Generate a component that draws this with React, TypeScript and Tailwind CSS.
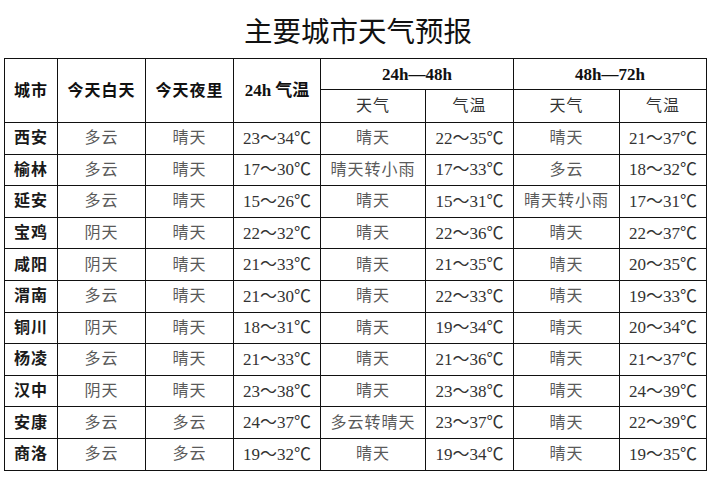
import React from 'react';

interface Row {
  city: string;
  day: string;
  night: string;
  temp24: string;
  w48: string;
  t48: string;
  w72: string;
  t72: string;
}

const rows: Row[] = [
  { city: '西安', day: '多云', night: '晴天', temp24: '23～34℃', w48: '晴天', t48: '22～35℃', w72: '晴天', t72: '21～37℃' },
  { city: '榆林', day: '多云', night: '晴天', temp24: '17～30℃', w48: '晴天转小雨', t48: '17～33℃', w72: '多云', t72: '18～32℃' },
  { city: '延安', day: '多云', night: '晴天', temp24: '15～26℃', w48: '晴天', t48: '15～31℃', w72: '晴天转小雨', t72: '17～31℃' },
  { city: '宝鸡', day: '阴天', night: '晴天', temp24: '22～32℃', w48: '晴天', t48: '22～36℃', w72: '晴天', t72: '22～37℃' },
  { city: '咸阳', day: '阴天', night: '晴天', temp24: '21～33℃', w48: '晴天', t48: '21～35℃', w72: '晴天', t72: '20～35℃' },
  { city: '渭南', day: '多云', night: '晴天', temp24: '21～30℃', w48: '晴天', t48: '22～33℃', w72: '晴天', t72: '19～33℃' },
  { city: '铜川', day: '阴天', night: '晴天', temp24: '18～31℃', w48: '晴天', t48: '19～34℃', w72: '晴天', t72: '20～34℃' },
  { city: '杨凌', day: '多云', night: '晴天', temp24: '21～33℃', w48: '晴天', t48: '21～36℃', w72: '晴天', t72: '21～37℃' },
  { city: '汉中', day: '阴天', night: '晴天', temp24: '23～38℃', w48: '晴天', t48: '23～38℃', w72: '晴天', t72: '24～39℃' },
  { city: '安康', day: '多云', night: '多云', temp24: '24～37℃', w48: '多云转晴天', t48: '23～37℃', w72: '晴天', t72: '22～39℃' },
  { city: '商洛', day: '多云', night: '多云', temp24: '19～32℃', w48: '晴天', t48: '19～34℃', w72: '晴天', t72: '19～35℃' },
];

const serif = 'font-["Liberation_Serif","Noto_Sans_CJK_SC",serif]';

export default function App() {
  const cell = 'border border-[#111] text-center align-middle p-0 leading-none';
  const word = `${cell} text-[#5a5a5a] tracking-[1px]`;
  const num = `${cell} text-[#333] text-[17px]`;

  return (
    <div className={`w-[716px] h-[478px] bg-white ${serif}`}>
      <div className="h-[58px] flex items-center justify-center pt-[2px]">
        <h1 className='text-[28.5px] font-["Noto_Sans_CJK_SC",sans-serif] text-[#111] leading-none'>
          主要城市天气预报
        </h1>
      </div>

      <table className="ml-[4px] w-[702px] table-fixed border-collapse text-[16px]">
        <colgroup>
          <col className="w-[53px]" />
          <col className="w-[88px]" />
          <col className="w-[88px]" />
          <col className="w-[87px]" />
          <col className="w-[105px]" />
          <col className="w-[88px]" />
          <col className="w-[106px]" />
          <col className="w-[87px]" />
        </colgroup>
        <thead>
          <tr className="h-[31px]">
            <th rowSpan={2} className={`${cell} font-bold text-[#111] tracking-[1px]`}>城市</th>
            <th rowSpan={2} className={`${cell} font-bold text-[#111] tracking-[1px]`}>今天白天</th>
            <th rowSpan={2} className={`${cell} font-bold text-[#111] tracking-[1px]`}>今天夜里</th>
            <th rowSpan={2} className={`${cell} font-bold text-[#111] text-[17px]`}>24h 气温</th>
            <th colSpan={2} className={`${cell} font-bold text-[#111] text-[17px]`}>24h—48h</th>
            <th colSpan={2} className={`${cell} font-bold text-[#111] text-[17px]`}>48h—72h</th>
          </tr>
          <tr className="h-[33px]">
            <th className={`${cell} font-normal text-[#333] tracking-[1px]`}>天气</th>
            <th className={`${cell} font-normal text-[#333] tracking-[1px]`}>气温</th>
            <th className={`${cell} font-normal text-[#333] tracking-[1px]`}>天气</th>
            <th className={`${cell} font-normal text-[#333] tracking-[1px]`}>气温</th>
          </tr>
        </thead>
        <tbody>
          {rows.map((r) => (
            <tr key={r.city} className="h-[31.6px]">
              <td className={`${cell} font-bold text-[#1a1a1a] tracking-[1px]`}>{r.city}</td>
              <td className={word}>{r.day}</td>
              <td className={word}>{r.night}</td>
              <td className={num}>{r.temp24}</td>
              <td className={word}>{r.w48}</td>
              <td className={num}>{r.t48}</td>
              <td className={word}>{r.w72}</td>
              <td className={num}>{r.t72}</td>
            </tr>
          ))}
        </tbody>
      </table>
    </div>
  );
}
